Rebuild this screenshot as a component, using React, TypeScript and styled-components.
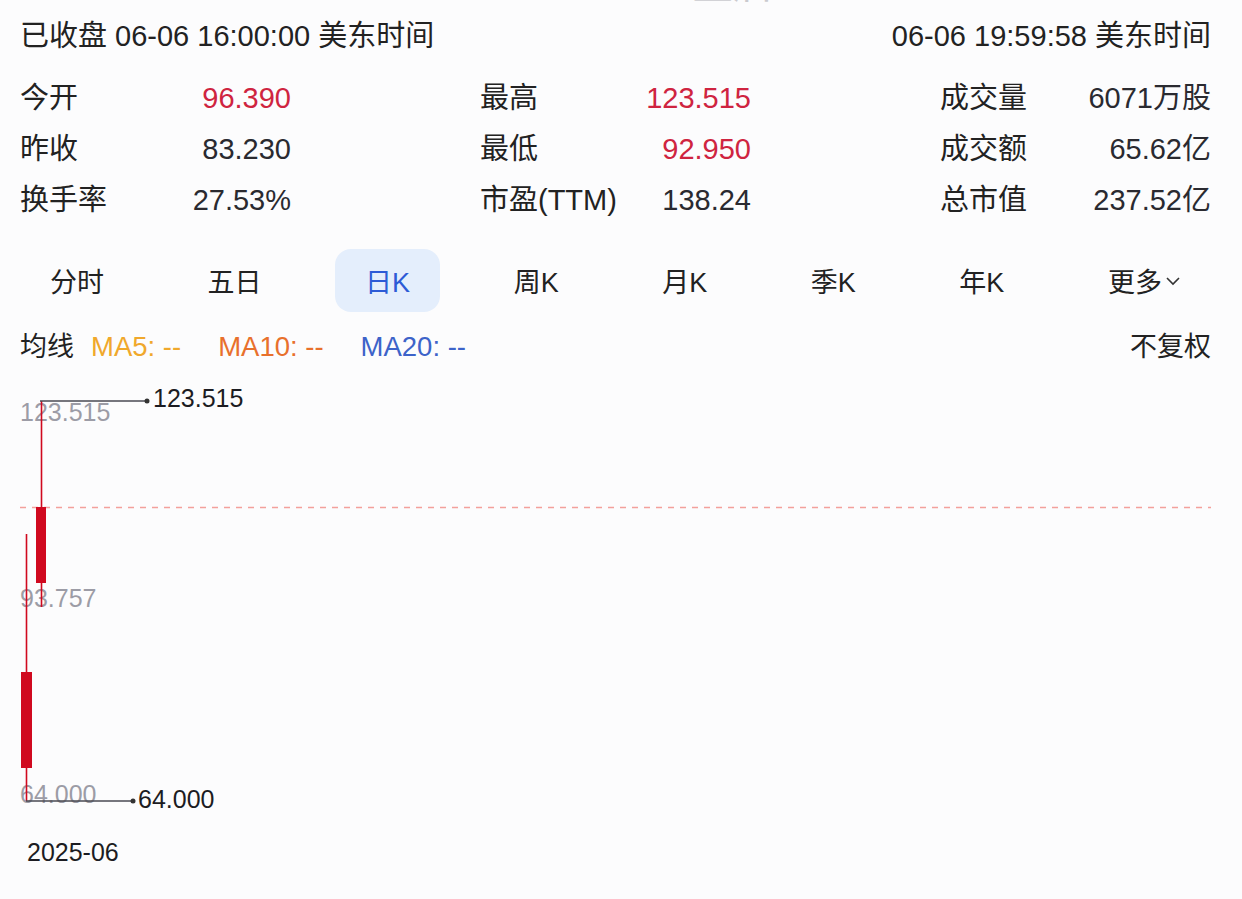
import React from "react";
import styled, { createGlobalStyle } from "styled-components";

const GlobalStyle = createGlobalStyle`
  html, body {
    margin: 0;
    padding: 0;
    background: #fcfcfd;
  }
  body {
    font-family: "Liberation Sans", "Noto Sans CJK SC", sans-serif;
    color: #1f1f24;
  }
`;

const Page = styled.div`
  width: 1242px;
  height: 899px;
  overflow: hidden;
  background: #fcfcfd;
`;

const TopClip = styled.div`
  height: 6px;
  overflow: hidden;
  padding: 0 31px 0 20px;
  display: flex;
  justify-content: space-between;
`;

const BigQuote = styled.div<{ $color: string }>`
  font-size: 40px;
  line-height: 40px;
  margin-top: -36px;
  color: ${({ $color }) => $color};
  opacity: 0.5;
  white-space: nowrap;
`;

const HeaderRow = styled.div`
  height: 54px;
  padding: 0 31px 0 20px;
  display: flex;
  align-items: center;
  justify-content: space-between;
  font-size: 29px;
  color: #222;
`;

const StatsGrid = styled.div`
  margin-top: 9px;
  padding: 0 31px 0 20px;
  display: grid;
  grid-template-columns: 271px 271px 271px;
  grid-auto-rows: 51px;
  justify-content: space-between;
  align-items: center;
  font-size: 29px;
`;

const StatCell = styled.div`
  display: flex;
  align-items: baseline;
  justify-content: space-between;
`;

const StatLabel = styled.span`
  color: #222;
`;

const StatValue = styled.span<{ $red?: boolean }>`
  color: ${({ $red }) => ($red ? "#cf2440" : "#2a2a30")};
`;

const Tabs = styled.div`
  margin-top: 27px;
  padding: 0 31px 0 20px;
  display: flex;
  justify-content: space-between;
`;

const Tab = styled.div<{ $active?: boolean }>`
  height: 63px;
  padding: 0 30px;
  display: flex;
  align-items: center;
  gap: 3px;
  font-size: 27px;
  border-radius: 16px;
  color: ${({ $active }) => ($active ? "#2d5bd6" : "#222")};
  background: ${({ $active }) => ($active ? "#e4eefc" : "transparent")};
`;

const MaRow = styled.div`
  margin-top: 10px;
  height: 50px;
  padding: 0 31px 0 20px;
  display: flex;
  align-items: baseline;
  line-height: 50px;
  font-size: 27px;
`;

const MaTitle = styled.span`
  color: #222;
  margin-right: 17px;
`;

const MaItem = styled.span<{ $color: string }>`
  color: ${({ $color }) => $color};
  margin-right: 37px;
  font-size: 27.5px;
`;

const Adjust = styled.span`
  margin-left: auto;
  color: #222;
`;

const ChartBox = styled.div`
  height: 527px;
`;

const stats = [
  ["今开", "96.390", true],
  ["最高", "123.515", true],
  ["成交量", "6071万股", false],
  ["昨收", "83.230", false],
  ["最低", "92.950", true],
  ["成交额", "65.62亿", false],
  ["换手率", "27.53%", false],
  ["市盈(TTM)", "138.24", false],
  ["总市值", "237.52亿", false],
] as const;

const tabs = ["分时", "五日", "日K", "周K", "月K", "季K", "年K"];

const Chevron = () => (
  <svg width="16" height="10" viewBox="0 0 16 10">
    <path d="M2 2 L8 8 L14 2" fill="none" stroke="#333" strokeWidth="1.6" />
  </svg>
);

// y coordinates below are page y minus 372 (chart top)
const Chart = () => {
  const off = 372;
  const red = "#d0091f";
  return (
    <svg width="1242" height="527" viewBox="0 0 1242 527">
      <line x1="20" y1={507.5 - off} x2="1211" y2={507.5 - off} stroke="#f3a09c" strokeWidth="1.5" strokeDasharray="6 6" />
      <g fontFamily="Liberation Sans, sans-serif" fontSize="25" fill="#9c9ca6">
        <text x="20" y={421 - off}>123.515</text>
        <text x="20" y={607 - off}>93.757</text>
        <text x="20" y={803 - off}>64.000</text>
      </g>
      <line x1="26.5" y1={534 - off} x2="26.5" y2={801 - off} stroke={red} strokeWidth="1.6" />
      <rect x="21" y={672 - off} width="11" height="96" fill={red} />
      <line x1="41.5" y1={401 - off} x2="41.5" y2={607 - off} stroke={red} strokeWidth="1.6" />
      <rect x="36" y={507 - off} width="10" height="76" fill={red} />
      <line x1="40" y1={401 - off} x2="147" y2={401 - off} stroke="#4a4a52" strokeWidth="1.5" />
      <circle cx="147" cy={401 - off} r="2.5" fill="#333" />
      <line x1="26" y1={801 - off} x2="133" y2={801 - off} stroke="#4a4a52" strokeWidth="1.5" />
      <circle cx="133" cy={801 - off} r="2.5" fill="#333" />
      <g fontFamily="Liberation Sans, sans-serif" fontSize="25" fill="#1c1c22">
        <text x="153" y={407 - off}>123.515</text>
        <text x="138" y={808 - off}>64.000</text>
        <text x="27" y={861 - off}>2025-06</text>
      </g>
    </svg>
  );
};

const App = () => {
  return (
    <Page>
      <GlobalStyle />
      <TopClip>
        <BigQuote $color="#d8405a">123.515 ↑ +40.285 +48.40%</BigQuote>
        <BigQuote $color="#9a9aa2">盘后 123.600 +0.085 +0.07%</BigQuote>
      </TopClip>
      <HeaderRow>
        <span>已收盘 06-06 16:00:00 美东时间</span>
        <span>06-06 19:59:58 美东时间</span>
      </HeaderRow>
      <StatsGrid>
        {stats.map(([label, value, red]) => (
          <StatCell key={label}>
            <StatLabel>{label}</StatLabel>
            <StatValue $red={red}>{value}</StatValue>
          </StatCell>
        ))}
      </StatsGrid>
      <Tabs>
        {tabs.map((t) => (
          <Tab key={t} $active={t === "日K"}>
            {t}
          </Tab>
        ))}
        <Tab>
          更多
          <Chevron />
        </Tab>
      </Tabs>
      <MaRow>
        <MaTitle>均线</MaTitle>
        <MaItem $color="#f0a82c">MA5: --</MaItem>
        <MaItem $color="#e8702c">MA10: --</MaItem>
        <MaItem $color="#3d63c9">MA20: --</MaItem>
        <Adjust>不复权</Adjust>
      </MaRow>
      <ChartBox>
        <Chart />
      </ChartBox>
    </Page>
  );
};

export default App;
